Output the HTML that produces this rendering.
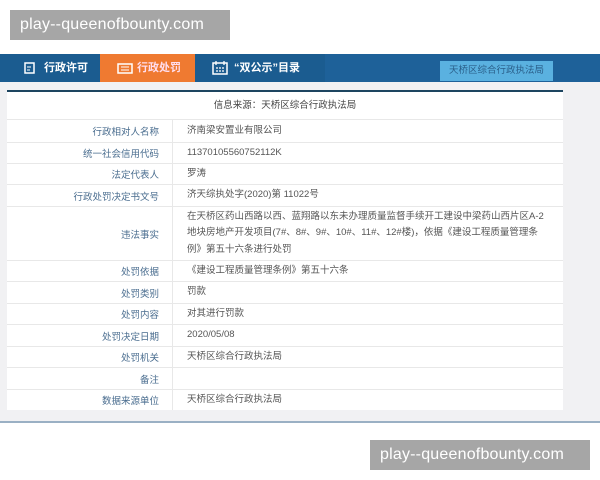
<!DOCTYPE html>
<html><head><meta charset="utf-8"><style>
*{margin:0;padding:0;box-sizing:border-box}
body{width:600px;height:480px;background:#fff;position:relative;overflow:hidden;font-family:"Liberation Sans","Noto Sans CJK SC",sans-serif}
.wm{position:absolute;background:#a6a6a6;color:#fff;font-size:16px;line-height:30px;width:220px;height:30px;padding-left:10px;letter-spacing:0.2px}
.nav{position:absolute;left:0;top:54px;width:600px;height:28px;background:#1b5c90}
.nav .t{position:absolute;top:0;height:28px;line-height:28px;color:#fff;font-size:11px;font-weight:bold}
.page{position:absolute;left:0;top:82px;width:600px;height:341px;background:#f1f1f3;border-bottom:2px solid #9ab0c4}
.tbl{position:absolute;left:7px;top:8px;width:556px;height:320px;background:#fff;border-top:2px solid #1d4560}
.r{position:absolute;left:0;width:556px;border-top:1px solid #e8e8e8;font-size:9.5px;color:#555}
.l{position:absolute;left:0;width:166px;top:0;bottom:0;border-right:1px solid #e8e8e8;text-align:right;padding-right:13px;color:#4a6d8f;display:flex;align-items:center;justify-content:flex-end}
.v{position:absolute;left:180px;right:16px;top:0;bottom:0;display:flex;align-items:center;line-height:16.5px}
</style></head><body>
<div class="wm" style="left:10px;top:10px">play--queenofbounty.com</div>
<div class="nav">
 <div style="position:absolute;left:100px;top:0;width:95px;height:28px;background:#ef7a31"></div>
 <div style="position:absolute;left:325px;top:0;width:275px;height:28px;background:#1e6199"></div>
 <svg style="position:absolute;left:24px;top:8px" width="12" height="12"><rect x="1" y="1" width="9" height="10" fill="none" stroke="#fff" stroke-width="1.5"/><path d="M3 5h4M3 8h3" stroke="#fff"/></svg>
 <div class="t" style="left:44px">行政许可</div>
 <svg style="position:absolute;left:117px;top:9px" width="16" height="11"><rect x="1" y="1" width="14" height="9" fill="none" stroke="#fff" stroke-width="1.5"/><path d="M4 4h8M4 7h8" stroke="#fff"/></svg>
 <div class="t" style="left:137px;color:#fde">行政处罚</div>
 <svg style="position:absolute;left:212px;top:6px" width="16" height="15"><rect x="1" y="3" width="14" height="11" fill="none" stroke="#fff" stroke-width="1.5"/><path d="M4 1v4M12 1v4M4 8h2M7 8h2M10 8h2M4 11h2M7 11h2M10 11h2" stroke="#fff" stroke-width="1.3"/></svg>
 <div class="t" style="left:234px">“双公示”目录</div>
 <div style="position:absolute;left:440px;top:7px;width:113px;height:20px;background:#5ab1e0;color:#2a5f8a;font-size:9.5px;line-height:20px;text-align:center">天桥区综合行政执法局</div>
</div>
<div class="page"><div class="tbl">
 <div style="position:absolute;top:0;left:0;width:556px;height:27px;line-height:27px;text-align:center;font-size:9.5px;color:#444">信息来源：天桥区综合行政执法局</div>
 <div class="r" style="top:27px;height:23px"><div class="l">行政相对人名称</div><div class="v">济南梁安置业有限公司</div></div>
 <div class="r" style="top:50px;height:21px"><div class="l">统一社会信用代码</div><div class="v">11370105560752112K</div></div>
 <div class="r" style="top:71px;height:21px"><div class="l">法定代表人</div><div class="v">罗涛</div></div>
 <div class="r" style="top:92px;height:22px"><div class="l">行政处罚决定书文号</div><div class="v">济天综执处字(2020)第 11022号</div></div>
 <div class="r" style="top:114px;height:54px"><div class="l">违法事实</div><div class="v">在天桥区药山西路以西、蓝翔路以东未办理质量监督手续开工建设中梁药山西片区A-2地块房地产开发项目(7#、8#、9#、10#、11#、12#楼)，依据《建设工程质量管理条例》第五十六条进行处罚</div></div>
 <div class="r" style="top:168px;height:21px"><div class="l">处罚依据</div><div class="v">《建设工程质量管理条例》第五十六条</div></div>
 <div class="r" style="top:189px;height:22px"><div class="l">处罚类别</div><div class="v">罚款</div></div>
 <div class="r" style="top:211px;height:21px"><div class="l">处罚内容</div><div class="v">对其进行罚款</div></div>
 <div class="r" style="top:232px;height:22px"><div class="l">处罚决定日期</div><div class="v">2020/05/08</div></div>
 <div class="r" style="top:254px;height:21px"><div class="l">处罚机关</div><div class="v">天桥区综合行政执法局</div></div>
 <div class="r" style="top:275px;height:22px"><div class="l">备注</div><div class="v"></div></div>
 <div class="r" style="top:297px;height:21px"><div class="l">数据来源单位</div><div class="v">天桥区综合行政执法局</div></div>
</div></div>
<div class="wm" style="left:370px;top:440px">play--queenofbounty.com</div>
</body></html>
